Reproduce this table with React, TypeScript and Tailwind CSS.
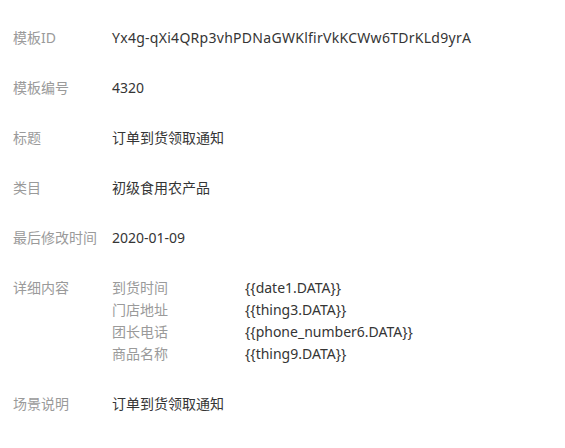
const rows: { label: string; value: string; wide?: boolean }[] = [
  { label: "模板ID", value: "Yx4g-qXi4QRp3vhPDNaGWKlfirVkKCWw6TDrKLd9yrA", wide: true },
  { label: "模板编号", value: "4320" },
  { label: "标题", value: "订单到货领取通知" },
  { label: "类目", value: "初级食用农产品" },
  { label: "最后修改时间", value: "2020-01-09" },
];

const details: { name: string; key: string }[] = [
  { name: "到货时间", key: "{{date1.DATA}}" },
  { name: "门店地址", key: "{{thing3.DATA}}" },
  { name: "团长电话", key: "{{phone_number6.DATA}}" },
  { name: "商品名称", key: "{{thing9.DATA}}" },
];

function Row({ label, children }: { label: string; children: React.ReactNode }) {
  return (
    <div className="flex">
      <div className="w-[99px] shrink-0 text-[#9a9a9a]">{label}</div>
      <div className="text-[#353535]">{children}</div>
    </div>
  );
}

export default function App() {
  return (
    <div
      className="min-h-screen w-full bg-white pt-[27px] pl-[13px] text-[14px] leading-[22px]"
      style={{ fontFamily: '"Noto Sans", "Noto Sans CJK SC", sans-serif' }}
    >
      <div className="flex flex-col gap-[28px]">
        {rows.map((r) => (
          <Row key={r.label} label={r.label}>
            <span className={r.wide ? "tracking-[0.28px]" : ""}>{r.value}</span>
          </Row>
        ))}
        <Row label="详细内容">
          <div className="flex flex-col">
            {details.map((d) => (
              <div key={d.name} className="flex">
                <div className="w-[133px] shrink-0 text-[#9a9a9a]">{d.name}</div>
                <div className="text-[#353535]">{d.key}</div>
              </div>
            ))}
          </div>
        </Row>
        <Row label="场景说明">订单到货领取通知</Row>
      </div>
    </div>
  );
}
